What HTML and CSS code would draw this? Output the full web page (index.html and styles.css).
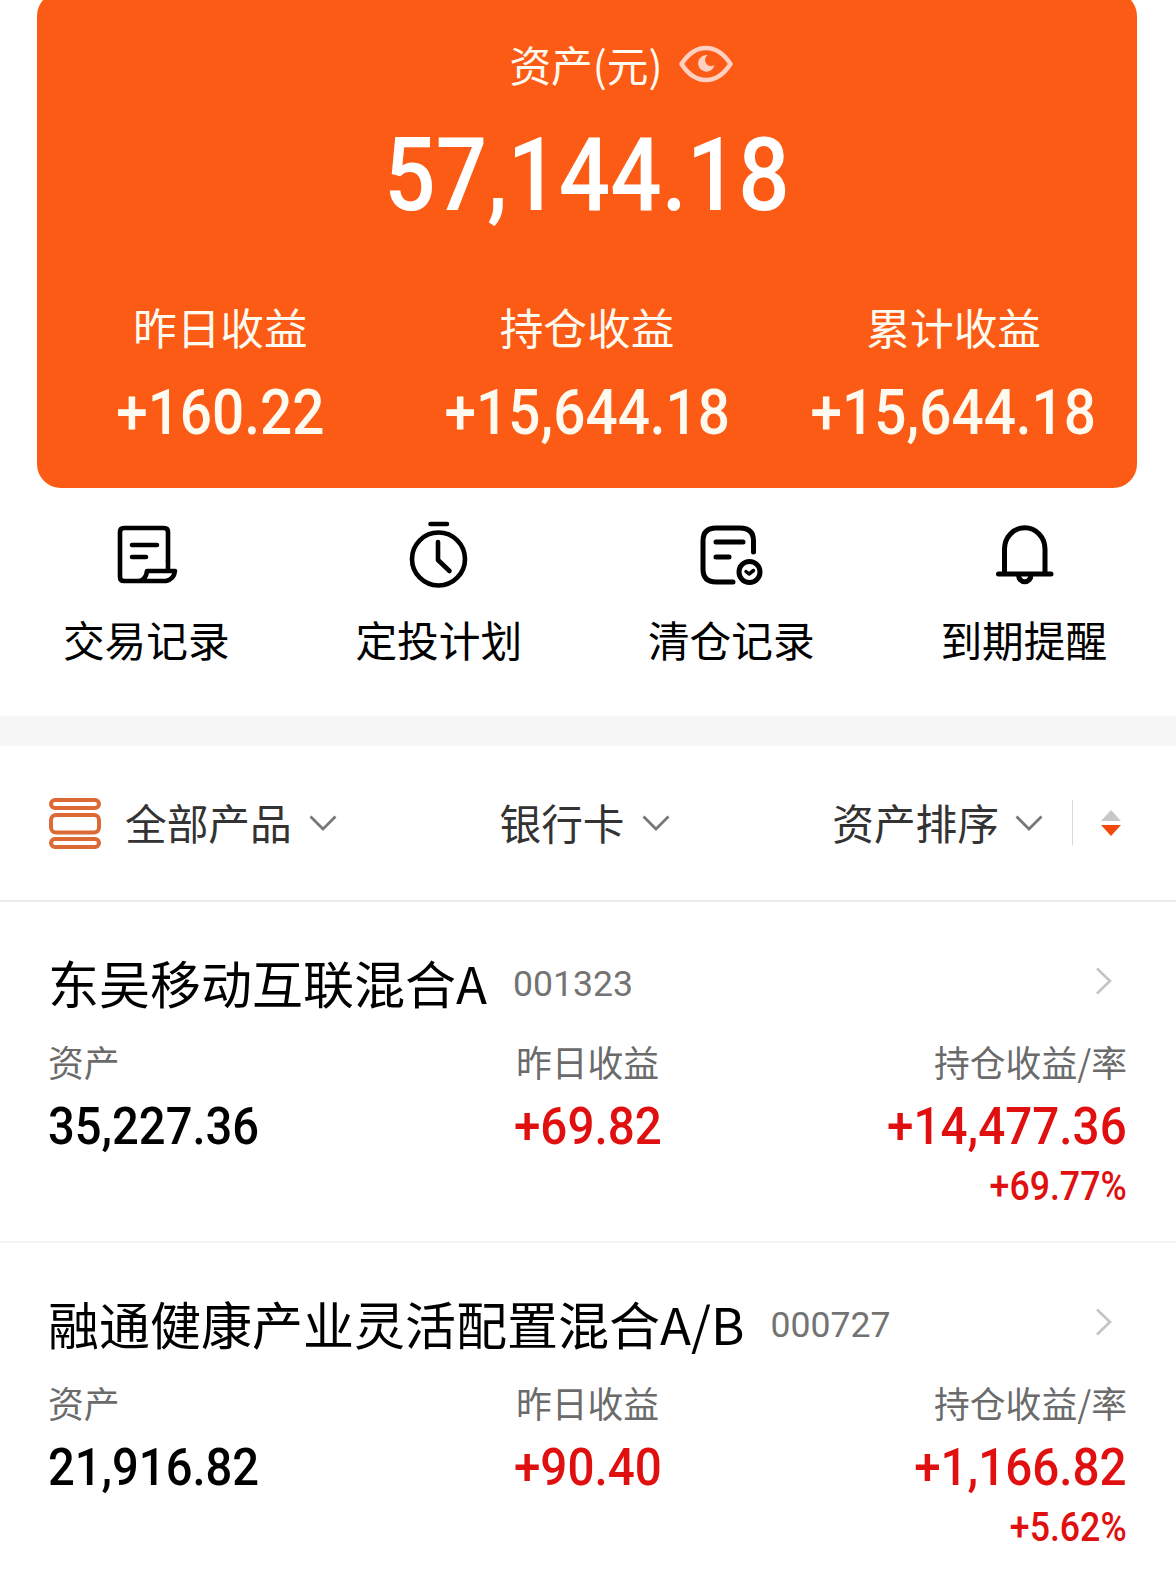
FILE: index.html
```
<!DOCTYPE html>
<html lang="zh-CN">
<head>
    <meta charset="UTF-8">
    <meta name="viewport" content="width=device-width, initial-scale=1.0">
    <title>我的资产</title>
    <link rel="stylesheet" href="styles.css">
</head>
<body>
    <!-- 资产卡片 -->
    <div class="asset-card">
        <div class="asset-title">
            <span>资产(元)</span>
            <svg class="eye" width="54" height="38" viewBox="0 0 54 38" fill="none">
                <path d="M2.500 19C9 9 17 3 27 3S45 9 51.500 19C45 29 37 35 27 35S9 29 2.500 19Z" stroke="#ffd0c2" stroke-width="4.400" stroke-linejoin="round"/>
                <path d="M28.500 10.200A8.300 8.300 0 1 0 35.500 20A5.500 5.500 0 0 1 28.500 10.200Z" fill="#ffd0c2"/>
            </svg>
        </div>
        <div class="asset-total num">57,144.18</div>
        <div class="profit-row">
            <div class="profit">
                <div class="profit-label">昨日收益</div>
                <div class="profit-value num">+160.22</div>
            </div>
            <div class="profit">
                <div class="profit-label">持仓收益</div>
                <div class="profit-value num">+15,644.18</div>
            </div>
            <div class="profit">
                <div class="profit-label">累计收益</div>
                <div class="profit-value num">+15,644.18</div>
            </div>
        </div>
    </div>

    <!-- 快捷入口 -->
    <div class="actions">
        <div class="action">
            <svg width="70" height="70" viewBox="0 0 70 70" fill="none" stroke="#000" stroke-width="4.600" stroke-linecap="round" stroke-linejoin="round">
                <path d="M57 41V12Q57 8 53 8H13Q9 8 9 12V57Q9 61 13 61H55Q63 59 64 51H36Q35 60 28 61"/>
                <path d="M21 25H46M21 37H35M57 41V50"/>
            </svg>
            <span>交易记录</span>
        </div>
        <div class="action">
            <svg width="70" height="70" viewBox="0 0 70 70" fill="none" stroke="#000" stroke-width="4.600" stroke-linecap="round" stroke-linejoin="round">
                <circle cx="34.500" cy="39" r="26.500"/>
                <path d="M26.500 4H43M34 22V40L45.500 51"/>
            </svg>
            <span>定投计划</span>
        </div>
        <div class="action">
            <svg width="70" height="70" viewBox="0 0 70 70" fill="none" stroke="#000" stroke-width="5" stroke-linecap="round" stroke-linejoin="round">
                <path d="M57.500 32V21Q57.500 8 44 8H20Q7 8 7 21V49Q7 62 20 62H37"/>
                <path d="M20 22H47M20 37H33"/>
                <circle cx="53.500" cy="52" r="10.500"/>
                <path d="M50 51.500L53 54L57.500 50.500" stroke-width="3.500"/>
            </svg>
            <span>清仓记录</span>
        </div>
        <div class="action">
            <svg width="70" height="70" viewBox="0 0 70 70" fill="none" stroke="#000" stroke-width="5" stroke-linecap="round">
                <path d="M15.500 54V29A20 21 0 0 1 56 29V54M9.500 54H62M29.500 55A6 6.500 0 0 0 42 55"/>
            </svg>
            <span>到期提醒</span>
        </div>
    </div>

    <div class="divider"></div>

    <!-- 筛选栏 -->
    <div class="filters">
        <div class="filter filter-product">
            <svg class="list-icon" width="54" height="54" viewBox="0 0 54 54" fill="none" stroke="#dd6a35" stroke-width="4">
                <rect x="3" y="4" width="48" height="8" rx="4"/>
                <rect x="3" y="19" width="48" height="17.500" rx="5"/>
                <rect x="3" y="43" width="48" height="8" rx="4"/>
            </svg>
            <span>全部产品</span>
            <svg class="chevron" width="28" height="18" viewBox="0 0 28 18" fill="none" stroke="#777" stroke-width="2.800"><path d="M1.500 2.500L14 15L26.500 2.500"/></svg>
        </div>
        <div class="filter">
            <span>银行卡</span>
            <svg class="chevron" width="28" height="18" viewBox="0 0 28 18" fill="none" stroke="#777" stroke-width="2.800"><path d="M1.500 2.500L14 15L26.500 2.500"/></svg>
        </div>
        <div class="filter filter-sort">
            <span>资产排序</span>
            <svg class="chevron" width="28" height="18" viewBox="0 0 28 18" fill="none" stroke="#777" stroke-width="2.800"><path d="M1.500 2.500L14 15L26.500 2.500"/></svg>
            <div class="sort-arrows">
                <svg width="20" height="26" viewBox="0 0 20 26">
                    <path d="M10 0L20 11H0Z" fill="#c8c8c8"/>
                    <path d="M0 15H20L10 26Z" fill="#f4490c"/>
                </svg>
            </div>
        </div>
    </div>

    <!-- 基金列表 -->
    <div class="fund">
        <div class="fund-head">
            <span class="fund-name">东吴移动互联混合A</span>
            <span class="fund-code">001323</span>
            <svg class="arrow" width="18" height="28" viewBox="0 0 18 28" fill="none" stroke="#c4c4c4" stroke-width="2.600"><path d="M2 1.500L15 14L2 26.500"/></svg>
        </div>
        <div class="fund-data">
            <div class="cell">
                <div class="cell-label">资产</div>
                <div class="cell-value num">35,227.36</div>
            </div>
            <div class="cell">
                <div class="cell-label">昨日收益</div>
                <div class="cell-value num up">+69.82</div>
            </div>
            <div class="cell">
                <div class="cell-label">持仓收益/率</div>
                <div class="cell-value num up">+14,477.36</div>
                <div class="cell-rate num up">+69.77%</div>
            </div>
        </div>
    </div>
    <div class="fund">
        <div class="fund-head">
            <span class="fund-name">融通健康产业灵活配置混合A/B</span>
            <span class="fund-code">000727</span>
            <svg class="arrow" width="18" height="28" viewBox="0 0 18 28" fill="none" stroke="#c4c4c4" stroke-width="2.600"><path d="M2 1.500L15 14L2 26.500"/></svg>
        </div>
        <div class="fund-data">
            <div class="cell">
                <div class="cell-label">资产</div>
                <div class="cell-value num">21,916.82</div>
            </div>
            <div class="cell">
                <div class="cell-label">昨日收益</div>
                <div class="cell-value num up">+90.40</div>
            </div>
            <div class="cell">
                <div class="cell-label">持仓收益/率</div>
                <div class="cell-value num up">+1,166.82</div>
                <div class="cell-rate num up">+5.62%</div>
            </div>
        </div>
    </div>
</body>
</html>
```
FILE: styles.css
```
* {
    box-sizing: border-box;
}
body {
    margin: 0;
    height: 1569px;
    overflow: hidden;
    background-color: #fff;
    color: #000;
    font-family: "Noto Sans CJK SC", sans-serif;
}
svg {
    flex: none;
    display: block;
}
/* 数字略微压窄 */
.num {
    font-family: Roboto, "Noto Sans CJK SC", sans-serif;
    font-weight: 500;
    white-space: nowrap;
    transform: scaleX(0.915);
}

/* 资产卡片 */
.asset-card {
    height: 496px;
    margin: -8px 39px 0 37px;
    padding-top: 42px;
    background-color: #fb5b14;
    border-radius: 24px;
    color: #fffaf0;
    text-align: center;
}
.asset-title {
    display: flex;
    align-items: center;
    justify-content: center;
    gap: 16px;
    height: 60px;
    padding-left: 68px;
    font-size: 41.7px;
    line-height: 60px;
}
.asset-total {
    margin-top: 21px;
    height: 120px;
    line-height: 120px;
    font-size: 102px;
    color: #fff;
    transform: scaleX(0.887);
}
.profit-row {
    display: flex;
    margin-top: 61px;
}
.profit {
    flex: 1;
}
.profit-label {
    font-size: 43.7px;
    line-height: 60px;
}
.profit-value {
    margin-top: 22px;
    font-size: 63px;
    line-height: 70px;
    transform: scaleX(0.9);
}

/* 快捷入口 */
.actions {
    display: flex;
    height: 228px;
    padding: 32px 6px 0 0;
}
.action {
    flex: 1;
    display: flex;
    flex-direction: column;
    align-items: center;
    gap: 19px;
    font-size: 41.7px;
    line-height: 60px;
}
.divider {
    height: 30px;
    background-color: #f7f7f7;
}

/* 筛选栏 */
.filters {
    display: flex;
    align-items: center;
    justify-content: space-between;
    height: 156px;
    padding: 0 55px 1px 48px;
    border-bottom: 2px solid #ebebeb;
    font-size: 41.7px;
    line-height: 58px;
    color: #333;
}
.filter {
    display: flex;
    align-items: center;
    gap: 17px;
}
.filter > span {
    padding-bottom: 2px;
}
.filter-product .list-icon {
    margin-right: 6px;
}
.filter-sort {
    gap: 16px;
}
.sort-arrows {
    display: flex;
    align-items: center;
    height: 45px;
    margin-left: 13px;
    padding-left: 28px;
    border-left: 1px solid #d8d8d8;
}

/* 基金列表 */
.fund {
    height: 341px;
    padding: 45px 49px 0 48px;
    border-bottom: 2px solid #f5f5f5;
}
.fund-head {
    display: flex;
    align-items: center;
    height: 70px;
}
.fund-name {
    font-size: 51px;
    line-height: 70px;
}
.fund-code {
    margin-left: 26px;
    padding-top: 4px;
    font-family: Roboto, sans-serif;
    font-size: 35.6px;
    color: #737373;
}
.arrow {
    margin-left: auto;
    margin-right: 14px;
    margin-bottom: 2px;
}
.fund-data {
    display: flex;
    margin-top: 19px;
}
.cell {
    flex: 1;
    text-align: center;
}
.cell:first-child {
    text-align: left;
}
.cell:last-child {
    text-align: right;
}
.cell:first-child .num {
    transform: scaleX(0.906);
    transform-origin: left center;
}
.cell:last-child .num {
    transform-origin: right center;
}
.cell-label {
    font-size: 35.8px;
    line-height: 50px;
    color: #6b6b6b;
}
.cell-value {
    margin-top: 11px;
    font-size: 52px;
    line-height: 60px;
}
.cell-rate {
    margin-top: 4px;
    font-size: 41px;
    line-height: 50px;
    transform: scaleX(0.87);
}
.up {
    color: #e01010;
}
```
